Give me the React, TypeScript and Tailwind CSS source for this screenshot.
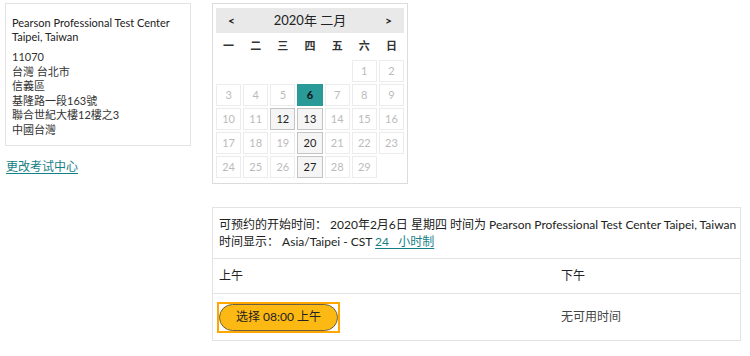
import { useState } from "react";

const FONT = { fontFamily: 'Lato, "Noto Sans CJK SC", sans-serif' };

const WEEKDAYS = ["一", "二", "三", "四", "五", "六", "日"];
const AVAILABLE = [12, 13, 20, 27];
const LEADING_BLANKS = 5;
const DAYS_IN_MONTH = 29;

function Calendar({ selected }: { selected: number }) {
  const cells: (number | null)[] = [
    ...Array(LEADING_BLANKS).fill(null),
    ...Array.from({ length: DAYS_IN_MONTH }, (_, i) => i + 1),
  ];

  return (
    <div className="w-[196px] h-[181px] border border-[#dcdcdc] px-[3px] pt-[4px]">
      {/* Month header */}
      <div className="h-[25px] bg-[#e9e9e9] flex items-center justify-between px-[12px] text-[13px] text-[#222]">
        <span className="font-bold text-[12px]">&lt;</span>
        <span className="text-[13px]">2020年 二月</span>
        <span className="font-bold text-[12px]">&gt;</span>
      </div>

      {/* Weekdays */}
      <div className="grid grid-cols-7 gap-x-[2px] h-[27px] items-center text-[11px] font-bold text-[#333]">
        {WEEKDAYS.map((d) => (
          <span key={d} className="text-center">
            {d}
          </span>
        ))}
      </div>

      {/* Days */}
      <div className="grid grid-cols-7 gap-[2px]">
        {cells.map((day, i) => {
          if (day === null) return <div key={i} className="h-[22px]" />;
          const isSel = day === selected;
          const isAvail = AVAILABLE.includes(day);
          return (
            <div
              key={i}
              className={`h-[22px] flex items-center justify-center text-[11px] border ${
                isSel
                  ? "bg-[#2a9a98] border-[#2a9a98] text-[#111] font-bold"
                  : isAvail
                    ? "bg-[#f5f5f5] border-[#c4c4c4] text-[#222]"
                    : "border-[#ececec] text-[#bbb]"
              }`}
            >
              {day}
            </div>
          );
        })}
      </div>
    </div>
  );
}

export default function App() {
  const [selected] = useState(6);

  return (
    <div className="w-[750px] h-[356px] bg-white flex text-[#222]" style={FONT}>
      {/* Test center card */}
      <div className="w-[212px] pl-[5px] pt-[3px] shrink-0">
        <div className="w-[186px] h-[143px] border border-[#e3e3e3] px-[6px] pt-[12px] text-[11px] leading-[15px]">
          <p className="leading-[14px] text-[11px]">
            Pearson Professional Test Center
            <br />
            Taipei, Taiwan
          </p>
          <div className="mt-[6px] text-[#333] leading-[14.5px]">
            <p>11070</p>
            <p>台灣 台北市</p>
            <p>信義區</p>
            <p>基隆路一段163號</p>
            <p>聯合世紀大樓12樓之3</p>
            <p>中國台灣</p>
          </div>
        </div>
        <a className="block mt-[12px] ml-[1px] text-[12px] text-[#147f86] underline underline-offset-2">
          更改考试中心
        </a>
      </div>

      {/* Calendar + times */}
      <div className="pt-[3px] w-[529px]">
        <Calendar selected={selected} />

        <div className="mt-[23px] border border-[#e3e3e3] text-[12px]">
          <div className="px-[6px] pt-[8px] pb-[8px] leading-[17px] border-b border-[#e3e3e3] whitespace-nowrap">
            <p>可预约的开始时间： 2020年2月6日 星期四 时间为 Pearson Professional Test Center Taipei, Taiwan</p>
            <p>
              时间显示： Asia/Taipei - CST{" "}
              <a className="text-[#147f86] underline underline-offset-2">24&nbsp;&nbsp;&nbsp;小时制</a>
            </p>
          </div>

          <div className="flex h-[35px] items-center border-b border-[#e3e3e3]">
            <span className="w-[348px] pl-[6px]">上午</span>
            <span>下午</span>
          </div>

          <div className="flex h-[46px] items-center">
            <div className="w-[348px] pl-[4px]">
              <div className="inline-block border-2 border-[#ffa600]">
                <button className="h-[27px] px-[16px] rounded-full bg-[#fdb913] border border-[#6b6045] text-[12px] text-[#222]">
                  选择 08:00 上午
                </button>
              </div>
            </div>
            <span className="text-[#444]">无可用时间</span>
          </div>
        </div>
      </div>
    </div>
  );
}
